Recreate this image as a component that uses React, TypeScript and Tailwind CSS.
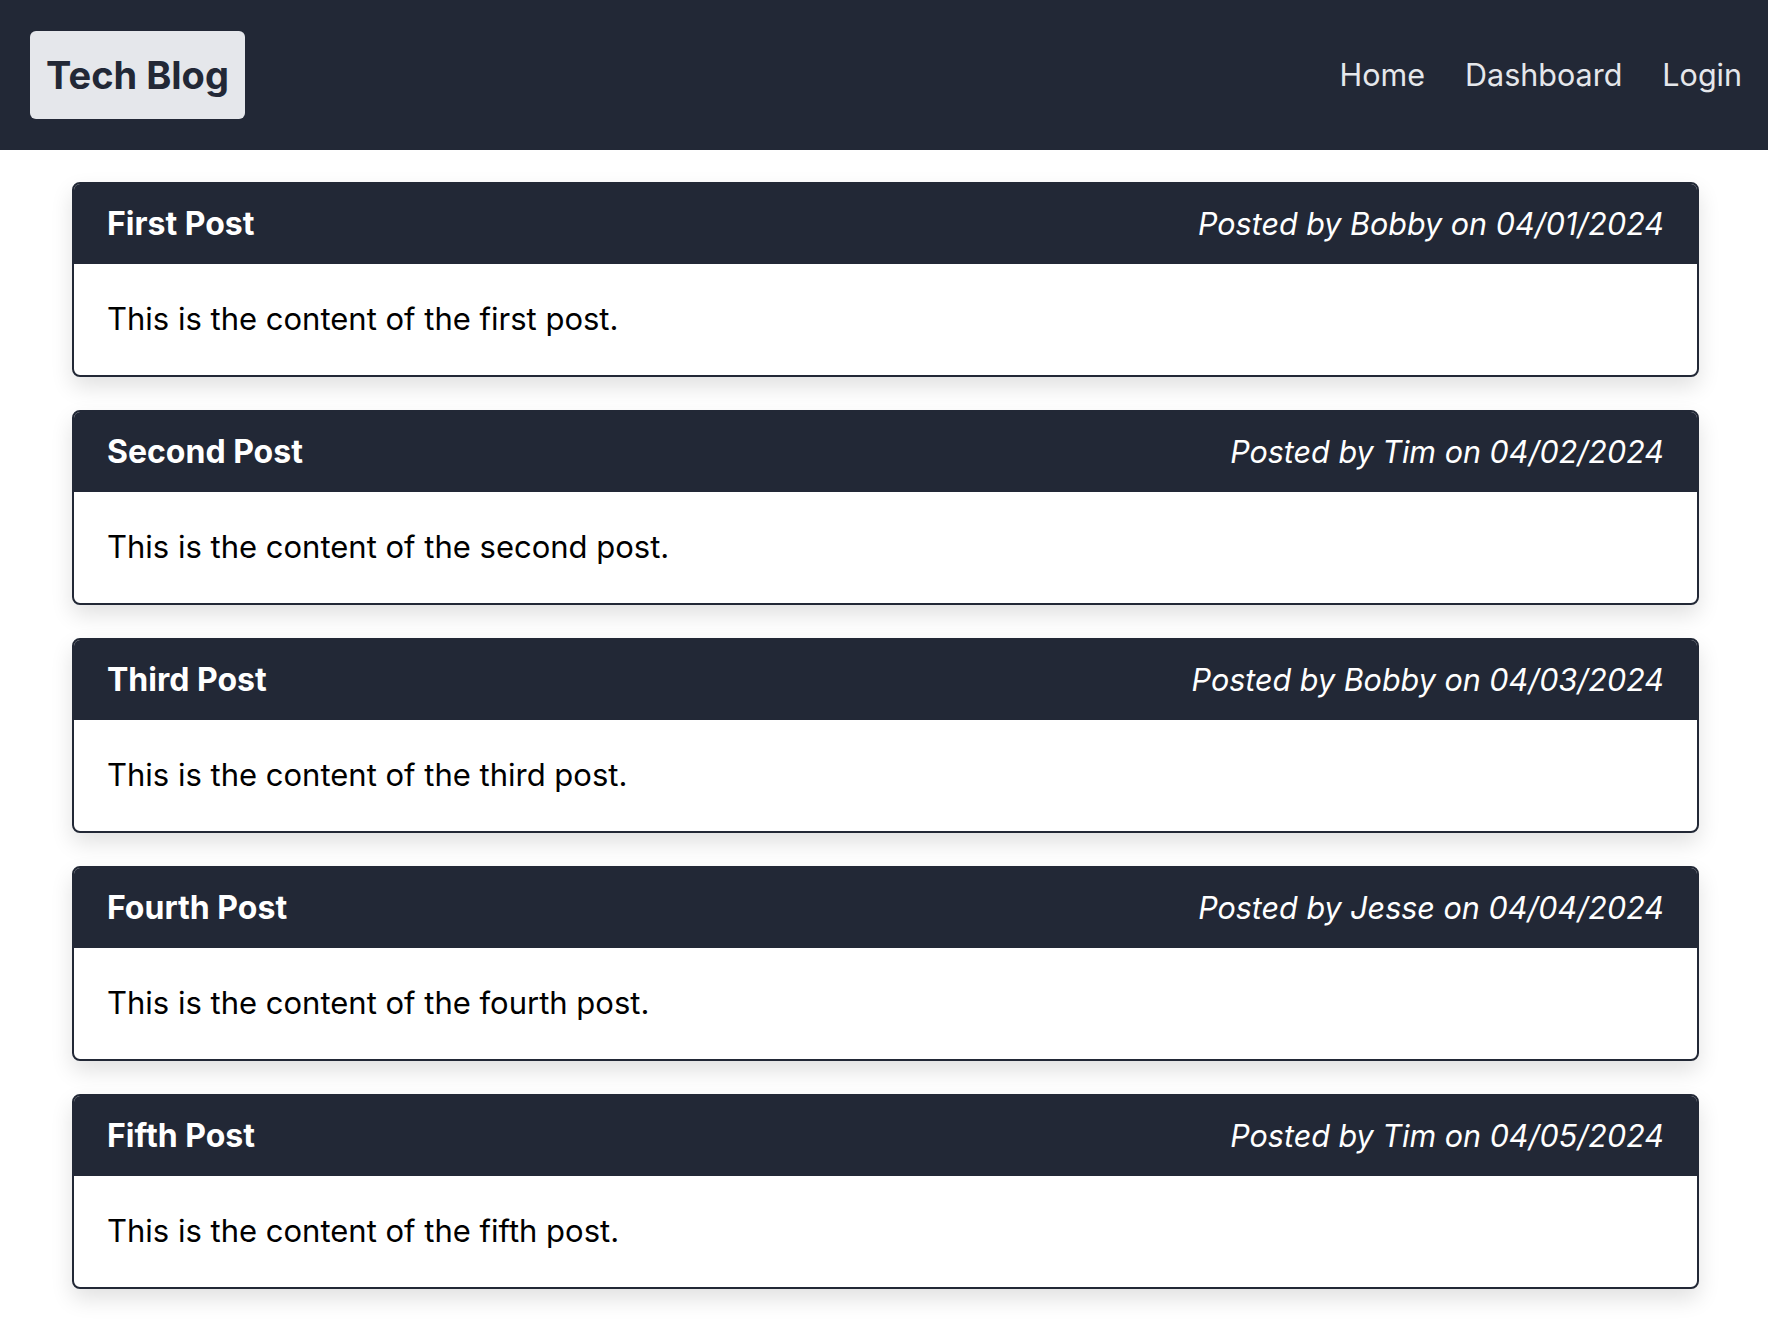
import React from 'react';

interface Post {
  title: string;
  author: string;
  date: string;
  content: string;
}

const POSTS: Post[] = [
  { title: 'First Post', author: 'Bobby', date: '04/01/2024', content: 'This is the content of the first post.' },
  { title: 'Second Post', author: 'Tim', date: '04/02/2024', content: 'This is the content of the second post.' },
  { title: 'Third Post', author: 'Bobby', date: '04/03/2024', content: 'This is the content of the third post.' },
  { title: 'Fourth Post', author: 'Jesse', date: '04/04/2024', content: 'This is the content of the fourth post.' },
  { title: 'Fifth Post', author: 'Tim', date: '04/05/2024', content: 'This is the content of the fifth post.' },
];

function PostCard({ post }: { post: Post }) {
  return (
    <article className="rounded-[8px] border-2 border-[#222836] bg-white shadow-[0_10px_22px_rgba(0,0,0,0.12)] overflow-hidden">
      <div className="h-[80px] px-[33px] flex items-center justify-between bg-[#222836] text-white">
        <h2 className="text-[32px] font-bold">{post.title}</h2>
        <span className="text-[30.5px] italic">Posted by {post.author} on {post.date}</span>
      </div>
      <div className="h-[111px] px-[33px] flex items-center">
        <p className="text-[31px] text-black">{post.content}</p>
      </div>
    </article>
  );
}

export default function App() {
  return (
    <div className="min-h-screen bg-white font-['Inter','Noto_Sans',sans-serif]">
      <header className="h-[150px] bg-[#222836] flex items-center justify-between pl-[30px] pr-[26px]">
        <a href="#" className="h-[88px] w-[215px] rounded-[6px] bg-gray-200 flex items-center justify-center text-[38px] font-bold text-[#222836]">
          Tech Blog
        </a>
        <nav className="flex items-center gap-[40px] text-[30.5px] text-gray-200">
          <a href="#">Home</a>
          <a href="#">Dashboard</a>
          <a href="#">Login</a>
        </nav>
      </header>
      <main className="pl-[72px] pr-[69px] pt-[32px] pb-[40px] flex flex-col gap-[33px]">
        {POSTS.map(post => (
          <PostCard key={post.title} post={post} />
        ))}
      </main>
    </div>
  );
}
